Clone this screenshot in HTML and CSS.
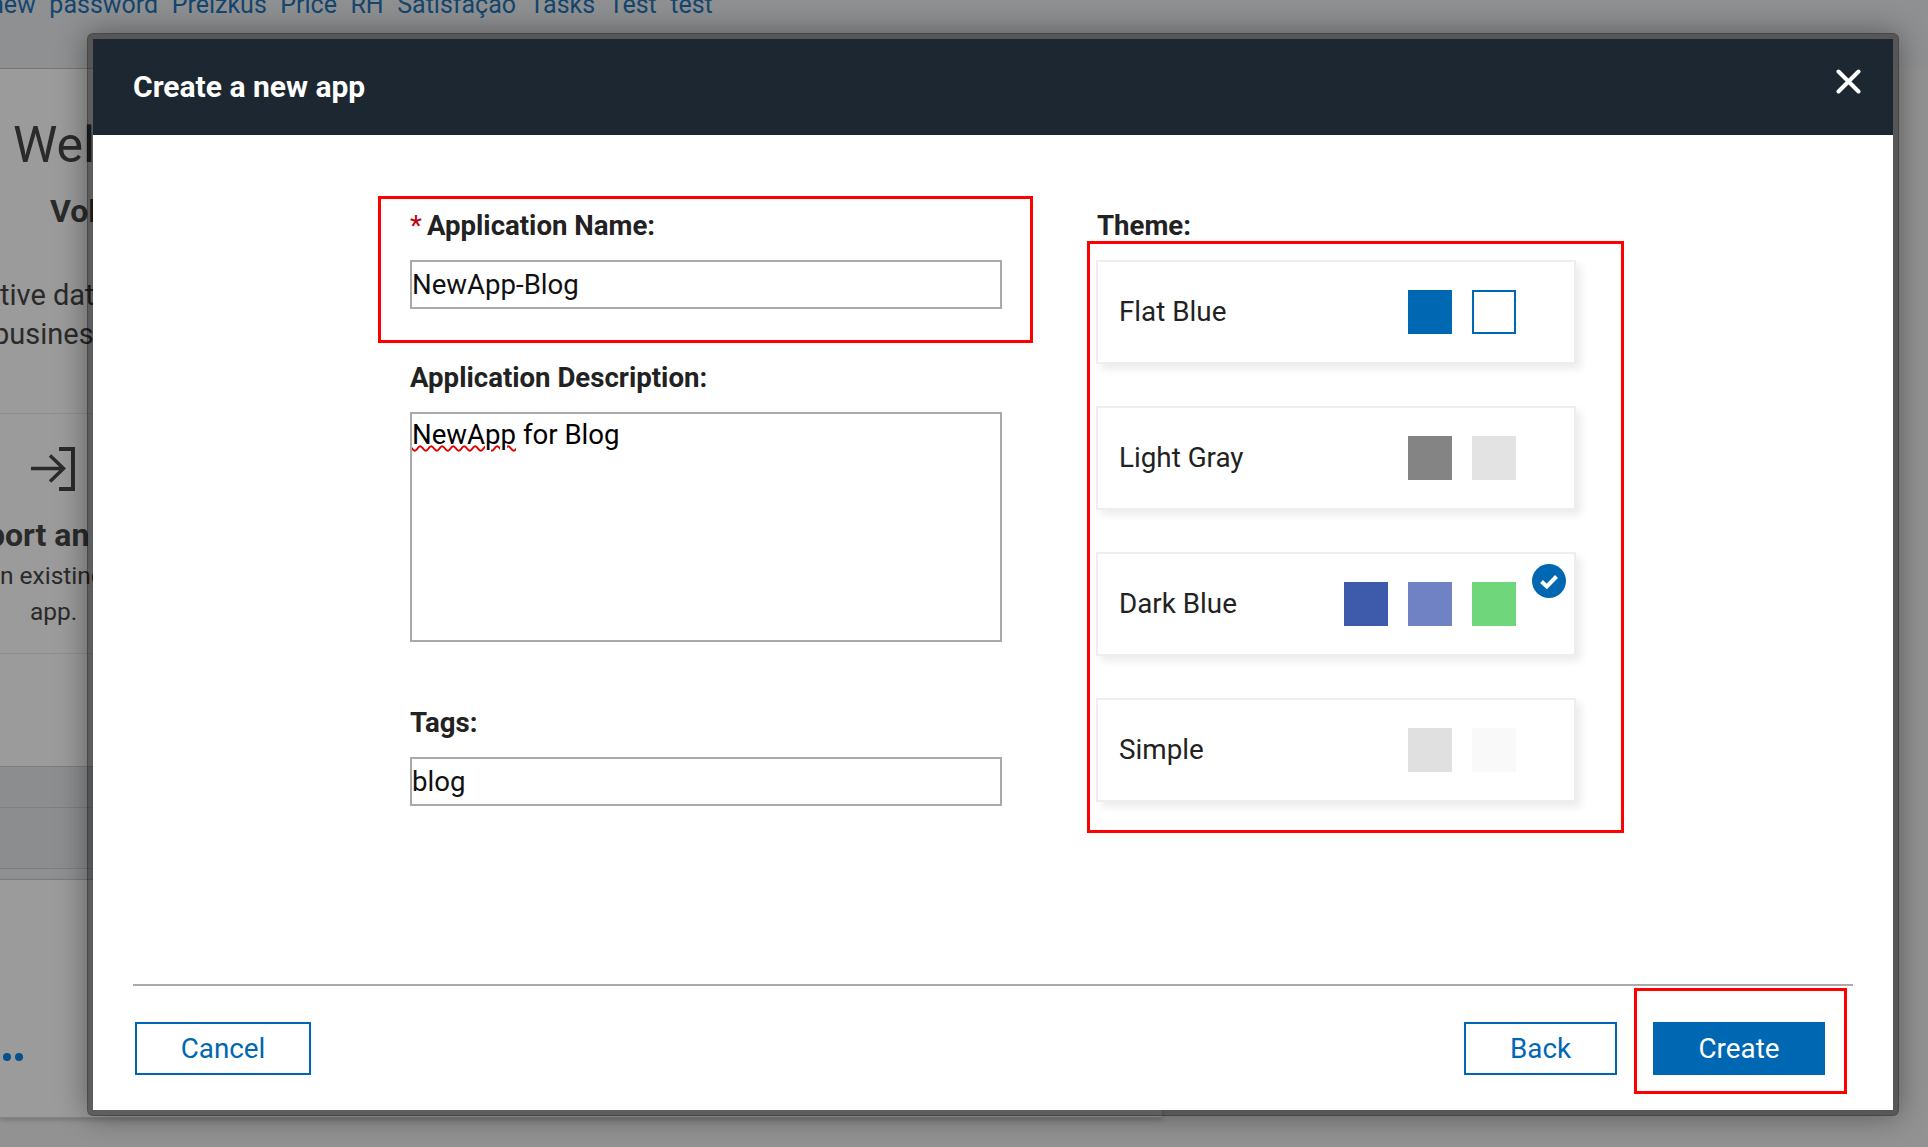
FILE: index.html
```html
<!DOCTYPE html>
<html>
	<head>
		<meta charset="UTF-8">
		<title>Create a new app</title>
		<link rel="stylesheet" href="styles.css">
	</head>
	<body>
		<!-- page behind the dialog -->
		<div class="page">
			<div class="nav">
				<a>new</a><a>password</a><a>Preizkus</a><a>Price</a><a>RH</a><a>Satisfação</a><a>Tasks</a><a>Test</a><a>test</a>
			</div>
			<div class="welcome">
				<h1>Wel</h1>
				<h2>Vol</h2>
				<p class="intro">tive dat</p>
				<p class="intro intro-cut">busines</p>
			</div>
			<div class="import">
				<svg class="import-icon" width="44" height="44" viewBox="0 0 44 44">
					<path d="M0 21.5H32M19 8.5L32.5 21.5L19 34.5" fill="none" stroke="#2b2b2b" stroke-width="3.5"/>
					<path d="M28 2H42V42H28" fill="none" stroke="#2b2b2b" stroke-width="4"/>
				</svg>
				<h3>port an</h3>
				<p class="import-text">n existing</p>
				<p class="import-app">app.</p>
			</div>
			<div class="gap-row"></div>
			<div class="dark-row"></div>
			<div class="dark-row dark-row-2"></div>
			<div class="thin-row"></div>
			<div class="page-end">
				<span class="dot"></span><span class="dot"></span>
			</div>
		</div>

		<div class="modal">
			<div class="modal-head">
				<span class="modal-title">Create a new app</span>
				<svg class="modal-close" width="25" height="25" viewBox="0 0 25 25">
					<path d="M2.5 2.5L22.5 22.5M22.5 2.5L2.5 22.5" stroke="#fff" stroke-width="4" stroke-linecap="round"/>
				</svg>
			</div>

			<div class="modal-body">
				<div class="col-form">
					<div class="mark mark-name">
						<label class="field-label"><span class="req">*</span>Application Name:</label>
						<input class="field" type="text" value="NewApp-Blog">
					</div>
					<label class="field-label label-desc">Application Description:</label>
					<div class="field field-area"><span class="typo">NewApp</span> for Blog</div>
					<label class="field-label label-tags">Tags:</label>
					<input class="field" type="text" value="blog">
				</div>

				<div class="col-theme">
					<label class="field-label theme-label">Theme:</label>
					<div class="mark mark-theme">
						<div class="card">
							<span>Flat Blue</span>
							<div class="swatches">
								<i class="swatch c-blue"></i>
								<i class="swatch c-outline"></i>
							</div>
						</div>
						<div class="card">
							<span>Light Gray</span>
							<div class="swatches">
								<i class="swatch c-gray"></i>
								<i class="swatch c-silver"></i>
							</div>
						</div>
						<div class="card">
							<span>Dark Blue</span>
							<div class="swatches">
								<i class="swatch c-indigo"></i>
								<i class="swatch c-periwinkle"></i>
								<i class="swatch c-green"></i>
							</div>
							<svg class="card-check" width="34" height="34" viewBox="0 0 34 34">
								<circle cx="17" cy="17" r="17" fill="#0067b3"/>
								<path d="M9.5 17.5L14.8 22.5L24.5 12.5" fill="none" stroke="#fff" stroke-width="4"/>
							</svg>
						</div>
						<div class="card">
							<span>Simple</span>
							<div class="swatches">
								<i class="swatch c-light"></i>
								<i class="swatch c-pale"></i>
							</div>
						</div>
					</div>
				</div>
			</div>

			<div class="modal-line"></div>
			<div class="modal-foot">
				<button class="btn btn-cancel">Cancel</button>
				<div class="foot-right">
					<button class="btn btn-back">Back</button>
					<div class="mark mark-create">
						<button class="btn btn-create">Create</button>
					</div>
				</div>
			</div>
		</div>
	</body>
</html>
```

FILE: styles.css
```css
*{margin: 0;padding: 0;box-sizing: border-box;}
html,body{height: 100%;}
body{background: #929292;font-family: Roboto, "Liberation Sans", sans-serif;color: #222;overflow: hidden;}

/* page behind */
.page{color: #2a2a2a;white-space: nowrap;}
.page > div{width: 1162px;background: #9b9b9b;overflow: hidden;}
.page > .nav{width: auto;height: 68px;background: #8f9092;display: flex;gap: 13.5px;margin-left: -10px;font-size: 25px;line-height: 30px;color: #14466e;}
.nav a{position: relative;top: -10px;}
.welcome{height: 346px;border-top: 1px solid #777;border-bottom: 1px solid #8f8f8f;}
.welcome h1{font-size: 50px;font-weight: 400;line-height: 60px;padding: 46px 0 0 13px;height: 106px;}
.welcome h2{font-size: 32px;font-weight: 700;line-height: 40px;margin: 16px 0 0 50px;}
.intro{font-size: 29px;line-height: 39px;}
.welcome h2 + .intro{margin-top: 45px;}
.intro-cut{margin-left: -7px;}
.import{height: 240px;border-bottom: 1px solid #8f8f8f;padding-top: 33px;}
.import-icon{display: block;margin-left: 31px;}
.import h3{font-size: 32px;font-weight: 700;line-height: 36px;margin: 26px 0 0 -13px;}
.import-text{font-size: 24.5px;line-height: 36px;margin-top: 5px;}
.import-app{font-size: 24.5px;line-height: 36px;margin-left: 30px;}
.gap-row{height: 113px;border-bottom: 1px solid #7d7d7d;}
.page > .dark-row{height: 41px;background: #8b8d8f;border-bottom: 1px solid #7d7f80;}
.page > .dark-row-2{height: 61px;}
.page > .thin-row{height: 11px;background: #8e9092;border-bottom: 1px solid #7d7f80;}
.page > .page-end{height: 238px;padding: 173px 0 0 3px;display: flex;gap: 4px;border-bottom: 1px solid #858585;box-shadow: 0 2px 5px rgba(0,0,0,0.2);overflow: visible;}
.dot{width: 8px;height: 8px;border-radius: 50%;background: #06508c;}

/* dialog */
.modal{position: absolute;left: 87px;top: 33px;width: 1812px;height: 1083px;border: 6px solid rgba(0,0,0,0.4);border-radius: 6px;background: #fff;background-clip: padding-box;display: flex;flex-direction: column;box-shadow: 0 0 30px rgba(0,0,0,0.4);color: #222;}
.modal-head{height: 96px;flex: none;background: #1c2731;color: #fff;display: flex;justify-content: space-between;align-items: flex-start;padding: 0 32px 0 40px;}
.modal-title{font-size: 30px;font-weight: 700;line-height: 34px;margin-top: 31px;}
.modal-close{margin-top: 30px;}

.modal-body{flex: 1;display: flex;padding: 61px 0 0 285px;gap: 54px;}
.col-form{width: 655px;padding-left: 32px;padding-right: 31px;}
.col-theme{width: 537px;padding-top: 15px;}

.mark{border: 3px solid #f00;}
.mark-name{margin: 0 -31px 0 -32px;padding: 12px 28px 31px 29px;}
.mark-theme{padding: 16px 0 28px 6px;}
.mark-create{padding: 31px 19px 16px 16px;margin-top: 2px;}

.field-label{display: block;font-size: 27.6px;font-weight: 700;line-height: 30px;margin-bottom: 19px;white-space: nowrap;}
.req{color: #c00010;font-weight: 400;margin-right: 5px;}
.label-desc{margin-top: 20px;}
.label-tags{margin-top: 66px;}
.theme-label{margin: 0 0 0 10px;}

.field{display: block;width: 592px;height: 49px;border: 2px solid #a9a9a9;background: #fff;padding: 0;font-family: inherit;font-size: 27.6px;color: #111;outline: none;}
.field-area{height: 230px;line-height: 41px;color: #000;}
.typo{text-decoration: underline wavy #e00000 2px;text-underline-offset: 1px;}

.card{position: relative;width: 480px;height: 104px;border: 2px solid #eee;background: #fff;box-shadow: 5px 5px 8px rgba(0,0,0,0.08);display: flex;align-items: center;justify-content: space-between;padding: 0 58px 0 21px;font-size: 27.8px;margin-bottom: 42px;}
.card > span{margin-bottom: 2px;}
.card:last-child{margin-bottom: 0;}
.swatches{display: flex;gap: 20px;}
.swatch{display: block;width: 44px;height: 44px;}
.c-blue{background: #0067b3;}
.c-outline{border: 2px solid #0067b3;}
.c-gray{background: #848484;}
.c-silver{background: #e3e3e3;}
.c-indigo{background: #3d5aab;}
.c-periwinkle{background: #7082c4;}
.c-green{background: #6fd67c;}
.c-light{background: #e0e0e0;}
.c-pale{background: #f9f9f9;}
.card-check{position: absolute;left: 434px;top: 10px;}

.modal-line{height: 2px;flex: none;margin: 0 40px;background: #aaa;}
.modal-foot{height: 124px;flex: none;display: flex;justify-content: space-between;align-items: flex-start;padding: 0 46px 0 42px;}
.foot-right{display: flex;align-items: flex-start;gap: 17px;}
.btn{height: 53px;border: 2px solid #0067b3;background: #fff;color: #0067b3;font-family: inherit;font-size: 27.8px;}
.btn-cancel{width: 176px;margin-top: 36px;}
.btn-back{width: 153px;margin-top: 36px;}
.btn-create{display: block;width: 172px;background: #0067b3;color: #fff;}
```
